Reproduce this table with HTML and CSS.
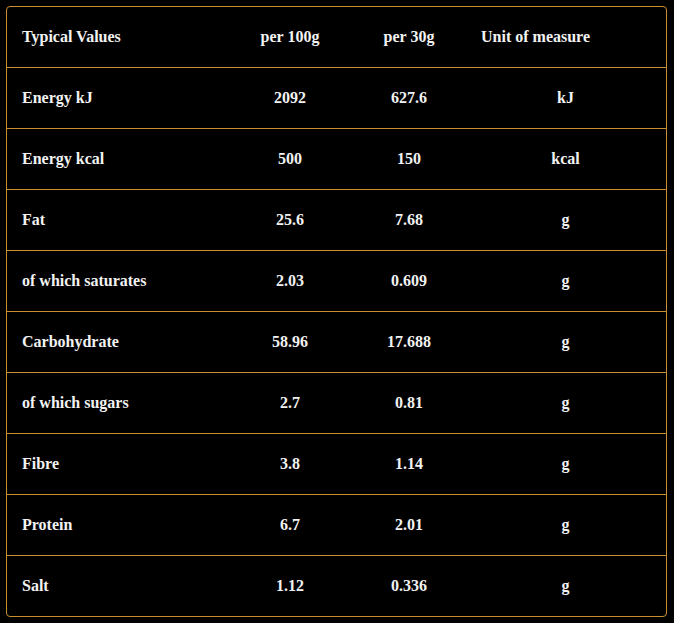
FILE: index.html
```html
<!DOCTYPE html>
<html>
<head>
<meta charset="utf-8">
<link rel="stylesheet" href="styles.css">
</head>
<body>
<div class="table">
  <div class="row head">
    <div class="c name">Typical Values</div>
    <div class="c num">per 100g</div>
    <div class="c num">per 30g</div>
    <div class="c unit-h">Unit of measure</div>
  </div>
  <div class="row"><div class="c name">Energy kJ</div><div class="c num">2092</div><div class="c num">627.6</div><div class="c num">kJ</div></div>
  <div class="row"><div class="c name">Energy kcal</div><div class="c num">500</div><div class="c num">150</div><div class="c num">kcal</div></div>
  <div class="row"><div class="c name">Fat</div><div class="c num">25.6</div><div class="c num">7.68</div><div class="c num">g</div></div>
  <div class="row"><div class="c name">of which saturates</div><div class="c num">2.03</div><div class="c num">0.609</div><div class="c num">g</div></div>
  <div class="row"><div class="c name">Carbohydrate</div><div class="c num">58.96</div><div class="c num">17.688</div><div class="c num">g</div></div>
  <div class="row"><div class="c name">of which sugars</div><div class="c num">2.7</div><div class="c num">0.81</div><div class="c num">g</div></div>
  <div class="row"><div class="c name">Fibre</div><div class="c num">3.8</div><div class="c num">1.14</div><div class="c num">g</div></div>
  <div class="row"><div class="c name">Protein</div><div class="c num">6.7</div><div class="c num">2.01</div><div class="c num">g</div></div>
  <div class="row"><div class="c name">Salt</div><div class="c num">1.12</div><div class="c num">0.336</div><div class="c num">g</div></div>
</div>
</body>
</html>
```
FILE: styles.css
```css
html, body {
  margin: 0;
  padding: 0;
  background: #000;
}
body {
  padding: 6px;
  font-family: "Liberation Serif", "DejaVu Serif", serif;
  font-weight: bold;
  font-size: 16px;
  line-height: 18px;
  color: #f2f2f2;
}
.table {
  width: 659px;
  border: 1px solid #c8902c;
  border-radius: 4px;
  overflow: hidden;
}
.row {
  display: grid;
  grid-template-columns: 220px 126px 112px 201px;
  height: 60px;
  border-top: 1px solid #c8902c;
  align-items: center;
  padding-bottom: 1px;
  box-sizing: border-box;
}
.row.head {
  border-top: none;
  height: 60px;
}
.row + .row {
  height: 61px;
}
.c {
  padding: 0 15px;
}
.name {
  text-align: left;
}
.num {
  text-align: center;
}
.unit-h {
  text-align: left;
  padding-left: 16px;
}
```
